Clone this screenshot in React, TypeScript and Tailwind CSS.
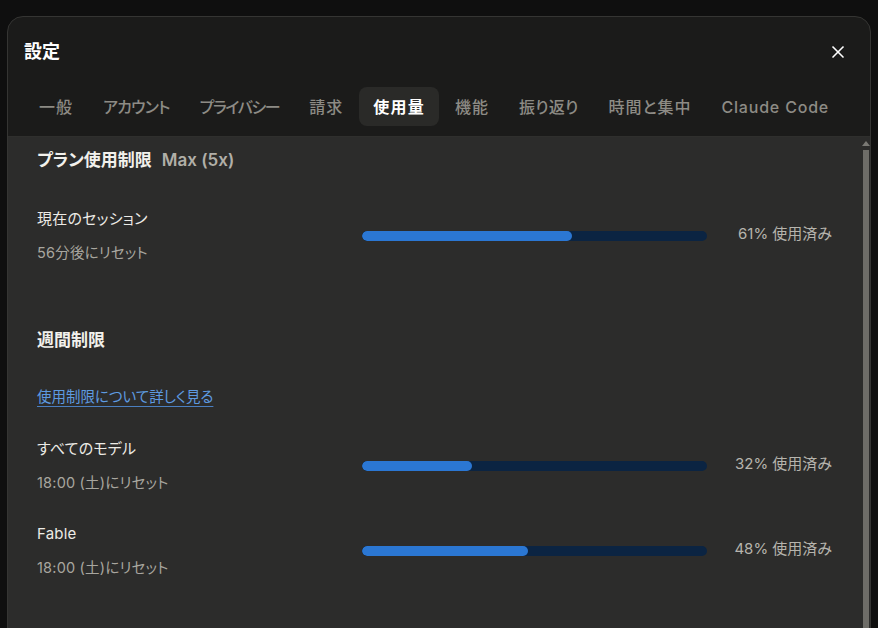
import { X } from 'lucide-react';

interface UsageRow {
  name: string;
  reset: string;
  percent: number;
}

interface Tab {
  label: string;
  spacing: string;
}

// kana labels are set tighter, kanji and latin labels a little looser
const tabs: Tab[] = [
  { label: '一般', spacing: 'tracking-[1px]' },
  { label: 'アカウント', spacing: 'tracking-[-0.8px]' },
  { label: 'プライバシー', spacing: 'tracking-[-1.4px]' },
  { label: '請求', spacing: 'tracking-[1px]' },
  { label: '使用量', spacing: 'tracking-[1.2px]' },
  { label: '機能', spacing: 'tracking-[1px]' },
  { label: '振り返り', spacing: 'tracking-[0.2px]' },
  { label: '時間と集中', spacing: 'tracking-[1px]' },
  { label: 'Claude Code', spacing: 'tracking-[0.8px]' },
];
const activeTab = '使用量';

const session: UsageRow = { name: '現在のセッション', reset: '56分後にリセット', percent: 61 };

const weekly: UsageRow[] = [
  { name: 'すべてのモデル', reset: '18:00 (土)にリセット', percent: 32 },
  { name: 'Fable', reset: '18:00 (土)にリセット', percent: 48 },
];

const UsageBar = ({ row }: { row: UsageRow }) => (
  <div className="grid grid-cols-[325px_345px_1fr] items-center">
    <div>
      <div className="text-[15px] leading-6 text-[#ecebe6] tracking-[0.2px]">{row.name}</div>
      <div className="mt-3 text-[14.5px] leading-5 text-[#a8a69f] tracking-[0.2px]">{row.reset}</div>
    </div>
    <div className="mt-[2px] h-[10px] rounded-full bg-[#0b2442] overflow-hidden">
      <div className="h-full rounded-full bg-[#2b77d3]" style={{ width: `${row.percent}%` }} />
    </div>
    <div className="text-right text-[15px] text-[#b6b4ad]">{row.percent}% 使用済み</div>
  </div>
);

export default function App() {
  return (
    <div
      className="w-[878px] h-[628px] overflow-hidden bg-[#0f0f0f] pt-4 px-[7px] [font-feature-settings:'palt']"
      style={{ fontFamily: 'Inter, "Noto Sans CJK JP", sans-serif' }}
    >
      <div className="h-[640px] flex flex-col rounded-2xl border border-[#353533] bg-[#1b1b1a] overflow-hidden">
        {/* header */}
        <div className="px-4 pt-[21px] pb-[10px]">
          <div className="flex items-center justify-between">
            <h1 className="text-[18px] leading-7 font-bold text-white">設定</h1>
            <button className="mr-[6px] text-white">
              <X size={20} strokeWidth={2} />
            </button>
          </div>
          <nav className="mt-[21px] flex items-center">
            {tabs.map(tab => (
              <div
                key={tab.label}
                className={
                  (tab.label === activeTab
                    ? 'px-[14px] mx-px h-[39px] flex items-center rounded-lg bg-[#2a2a28] text-[16px] font-bold text-white '
                    : 'px-[14px] mx-px h-[39px] flex items-center rounded-lg text-[16px] font-medium text-[#8d8b85] ') +
                  tab.spacing
                }
              >
                {tab.label}
              </div>
            ))}
          </nav>
        </div>

        {/* body */}
        <div className="flex-1 flex border-t border-[#2f2f2d] bg-[#2c2c2b]">
          <div className="flex-1 pl-[29px] pr-[26px] pt-[11px]">
            <div className="flex items-baseline gap-[10px]">
              <h2 className="text-[17px] leading-6 font-bold text-[#f2f1ec]">プラン使用制限</h2>
              <span className="text-[17px] font-semibold text-[#b1afa8]">Max (5x)</span>
            </div>

            <div className="mt-[33px]">
              <UsageBar row={session} />
            </div>

            <h2 className="mt-[65px] text-[17px] leading-6 font-bold text-[#f2f1ec]">週間制限</h2>

            <a className="mt-[35px] inline-block text-[14.5px] leading-5 text-[#5e9be0] underline underline-offset-4 decoration-[#4b7fc0]">
              使用制限について詳しく見る
            </a>

            <div className="mt-[29px] flex flex-col gap-[29px]">
              {weekly.map(row => (
                <UsageBar key={row.name} row={row} />
              ))}
            </div>
          </div>

          {/* scrollbar */}
          <div className="w-[12px] flex flex-col items-center pt-[4px] pl-[3px]">
            <div className="w-0 h-0 border-l-[4px] border-r-[4px] border-b-[5px] border-l-transparent border-r-transparent border-b-[#7a7974]" />
            <div className="mt-[4px] w-[6px] flex-1 bg-[#6e6d68]" />
          </div>
        </div>
      </div>
    </div>
  );
}
